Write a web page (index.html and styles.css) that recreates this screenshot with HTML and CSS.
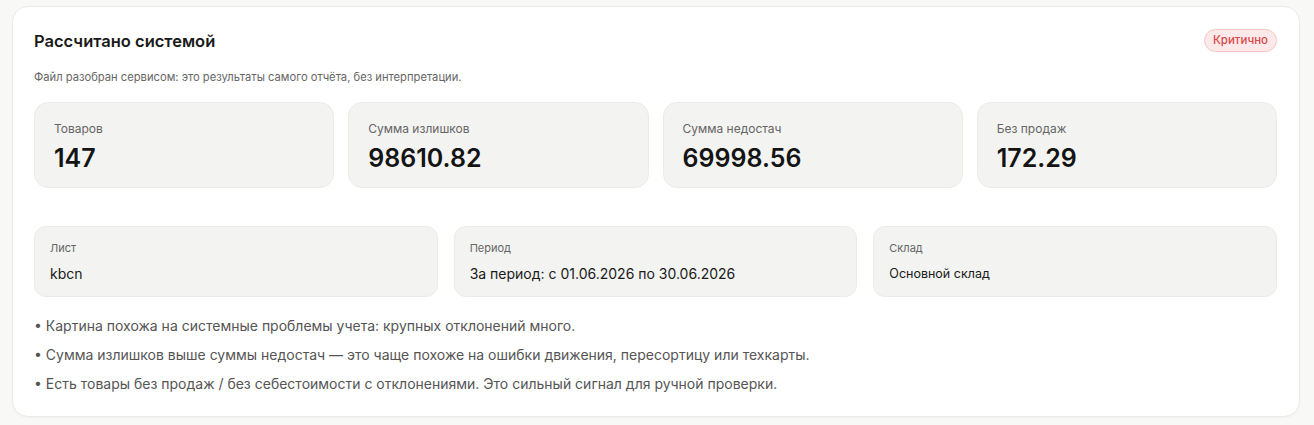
FILE: index.html
```html
<!DOCTYPE html>
<html lang="ru">

<head>
    <meta charset="UTF-8">
    <meta name="viewport" content="width=device-width, initial-scale=1.0">
    <title>Рассчитано системой</title>
    <link rel="stylesheet" href="styles.css">
</head>

<body>
    <div class="page">
        <section class="report">
            <div class="report-head">
                <h2>Рассчитано системой</h2>
                <span class="badge">Критично</span>
            </div>
            <p class="report-note">Файл разобран сервисом: это результаты самого отчёта, без интерпретации.</p>

            <!-- Основные показатели -->
            <div class="stats">
                <div class="stat">
                    <div class="stat-label">Товаров</div>
                    <div class="stat-value">147</div>
                </div>
                <div class="stat">
                    <div class="stat-label">Сумма излишков</div>
                    <div class="stat-value">98610.82</div>
                </div>
                <div class="stat">
                    <div class="stat-label">Сумма недостач</div>
                    <div class="stat-value">69998.56</div>
                </div>
                <div class="stat">
                    <div class="stat-label">Без продаж</div>
                    <div class="stat-value">172.29</div>
                </div>
            </div>

            <!-- Данные файла -->
            <div class="meta">
                <div class="meta-item">
                    <div class="meta-label">Лист</div>
                    <div class="meta-value">kbcn</div>
                </div>
                <div class="meta-item">
                    <div class="meta-label">Период</div>
                    <div class="meta-value">За период: с 01.06.2026 по 30.06.2026</div>
                </div>
                <div class="meta-item">
                    <div class="meta-label">Склад</div>
                    <div class="meta-value small">Основной склад</div>
                </div>
            </div>

            <div class="notes">
                <p>• Картина похожа на системные проблемы учета: крупных отклонений много.</p>
                <p>• Сумма излишков выше суммы недостач — это чаще похоже на ошибки движения, пересортицу или техкарты.</p>
                <p>• Есть товары без продаж / без себестоимости с отклонениями. Это сильный сигнал для ручной проверки.</p>
            </div>
        </section>
    </div>
</body>

</html>
```

FILE: styles.css
```css
body {
    font-family: Inter, "Noto Sans", Arial, sans-serif;
    margin: 0;
    padding: 0;
    background-color: #f8f8f6;
    color: #1a1a1a;
}

.page {
    padding: 6px 14px 10px 12px;
}

.report {
    background-color: #fff;
    border: 1px solid #ebebe7;
    border-radius: 16px;
    padding: 22px 22px 22px 21px;
    box-shadow: 0 1px 2px rgba(0, 0, 0, 0.03);
}

.report-head {
    display: flex;
    justify-content: space-between;
    align-items: center;
    height: 23px;
}

.report-head h2 {
    margin: 0;
    font-size: 16.5px;
    font-weight: 600;
    color: #1a1a1a;
}

.badge {
    font-size: 11.5px;
    font-weight: 500;
    color: #d84a4a;
    background-color: #fde9e9;
    border: 1px solid #f5c6c6;
    border-radius: 12px;
    padding: 3px 8px;
    line-height: 15px;
}

.report-note {
    margin: 17px 0 17px;
    font-size: 11.2px;
    line-height: 16px;
    color: #666;
}

.stats {
    display: grid;
    grid-template-columns: repeat(4, 1fr);
    gap: 14px;
}

.stat {
    background-color: #f3f3f1;
    border: 1px solid #ebebe8;
    border-radius: 14px;
    padding: 18px 19px 14px;
}

.stat-label {
    font-size: 12px;
    line-height: 16px;
    color: #666;
}

.stat-value {
    margin-top: 6px;
    font-size: 25px;
    line-height: 30px;
    font-weight: 600;
    color: #141414;
}

.meta {
    display: grid;
    grid-template-columns: repeat(3, 1fr);
    gap: 16px;
    margin-top: 38px;
}

.meta-item {
    background-color: #f3f3f1;
    border: 1px solid #ebebe8;
    border-radius: 12px;
    padding: 13px 15px 12px;
}

.meta-label {
    font-size: 11px;
    line-height: 16px;
    color: #666;
}

.meta-value {
    margin-top: 8px;
    font-size: 14px;
    line-height: 20px;
    color: #1a1a1a;
}

.meta-value.small {
    font-size: 12.5px;
}

.notes {
    margin-top: 19px;
}

.notes p {
    margin: 0 0 9px;
    font-size: 14px;
    line-height: 20px;
    color: #555;
}

.notes p:last-child {
    margin-bottom: 0;
}
```
